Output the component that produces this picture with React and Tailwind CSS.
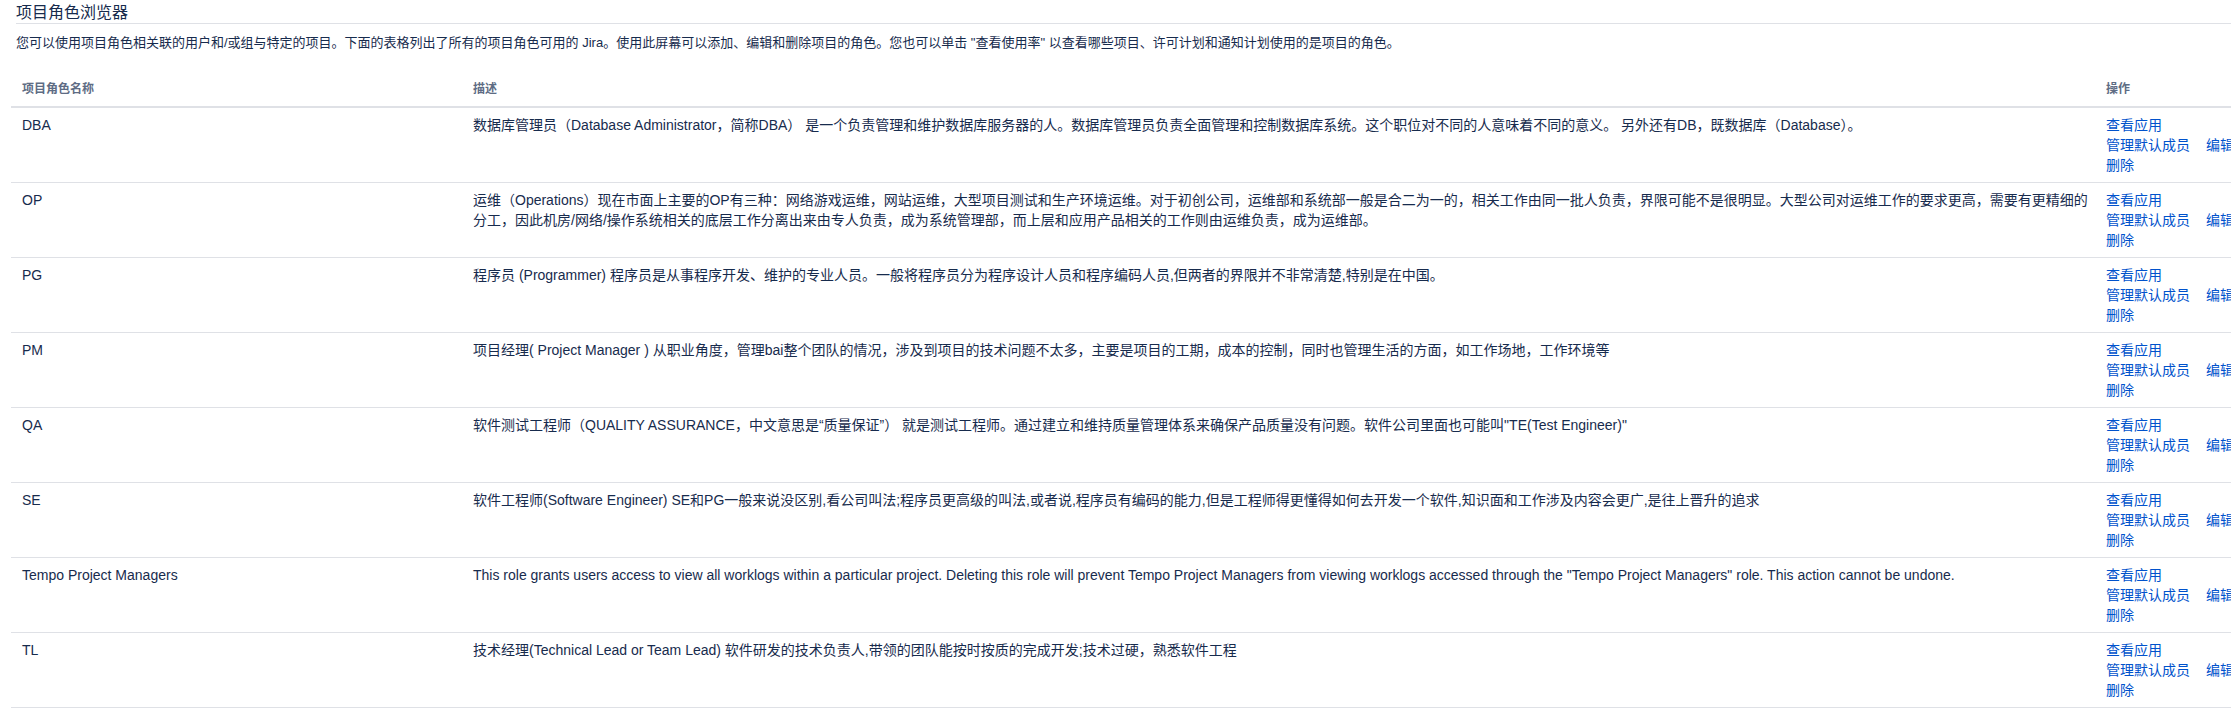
import React from "react";

const roles = [
  {
    name: "DBA",
    desc: "数据库管理员（Database Administrator，简称DBA） 是一个负责管理和维护数据库服务器的人。数据库管理员负责全面管理和控制数据库系统。这个职位对不同的人意味着不同的意义。 另外还有DB，既数据库（Database）。",
  },
  {
    name: "OP",
    desc: "运维（Operations）现在市面上主要的OP有三种：网络游戏运维，网站运维，大型项目测试和生产环境运维。对于初创公司，运维部和系统部一般是合二为一的，相关工作由同一批人负责，界限可能不是很明显。大型公司对运维工作的要求更高，需要有更精细的分工，因此机房/网络/操作系统相关的底层工作分离出来由专人负责，成为系统管理部，而上层和应用产品相关的工作则由运维负责，成为运维部。",
  },
  {
    name: "PG",
    desc: "程序员 (Programmer) 程序员是从事程序开发、维护的专业人员。一般将程序员分为程序设计人员和程序编码人员,但两者的界限并不非常清楚,特别是在中国。",
  },
  {
    name: "PM",
    desc: "项目经理( Project Manager ) 从职业角度，管理bai整个团队的情况，涉及到项目的技术问题不太多，主要是项目的工期，成本的控制，同时也管理生活的方面，如工作场地，工作环境等",
  },
  {
    name: "QA",
    desc: "软件测试工程师（QUALITY ASSURANCE，中文意思是“质量保证”） 就是测试工程师。通过建立和维持质量管理体系来确保产品质量没有问题。软件公司里面也可能叫\"TE(Test Engineer)\"",
  },
  {
    name: "SE",
    desc: "软件工程师(Software Engineer) SE和PG一般来说没区别,看公司叫法;程序员更高级的叫法,或者说,程序员有编码的能力,但是工程师得更懂得如何去开发一个软件,知识面和工作涉及内容会更广,是往上晋升的追求",
  },
  {
    name: "Tempo Project Managers",
    desc: "This role grants users access to view all worklogs within a particular project. Deleting this role will prevent Tempo Project Managers from viewing worklogs accessed through the \"Tempo Project Managers\" role. This action cannot be undone.",
  },
  {
    name: "TL",
    desc: "技术经理(Technical Lead or Team Lead) 软件研发的技术负责人,带领的团队能按时按质的完成开发;技术过硬，熟悉软件工程",
  },
];

function Operations() {
  return (
    <div className="text-[14px] leading-[20px] text-[#0052cc] whitespace-nowrap">
      <div>
        <a href="#">查看应用</a>
      </div>
      <div className="flex">
        <a href="#">管理默认成员</a>
        <a href="#" className="ml-[16px]">编辑</a>
      </div>
      <div>
        <a href="#">删除</a>
      </div>
    </div>
  );
}

export default function App() {
  return (
    <div
      className="w-full min-h-[727px] overflow-hidden bg-white text-[#172b4d]"
      style={{ fontFamily: '"Liberation Sans", "Noto Sans CJK SC", sans-serif' }}
    >
      <div className="pl-[16px]">
        <h2 className="pt-[3px] text-[16px] leading-[20px] font-normal border-b border-[#dfe1e6]">
          项目角色浏览器
        </h2>
        <p className="mt-[10px] text-[13px] leading-[18px]">
          您可以使用项目角色相关联的用户和/或组与特定的项目。下面的表格列出了所有的项目角色可用的 Jira。使用此屏幕可以添加、编辑和删除项目的角色。您也可以单击 "查看使用率" 以查看哪些项目、许可计划和通知计划使用的是项目的角色。
        </p>
      </div>

      <table className="mt-[20px] ml-[11px] w-[2400px] table-fixed border-collapse">
        <colgroup>
          <col className="w-[451px]" />
          <col className="w-[1633px]" />
          <col />
        </colgroup>
        <thead>
          <tr className="border-b-2 border-[#dfe1e6]">
            {["项目角色名称", "描述", "操作"].map((h) => (
              <th
                key={h}
                className="px-[11px] py-[7px] text-left text-[12px] leading-[20px] font-semibold text-[#5e6c84]"
              >
                {h}
              </th>
            ))}
          </tr>
        </thead>
        <tbody>
          {roles.map((r) => (
            <tr key={r.name} className="border-b border-[#dfe1e6] align-top">
              <td className="px-[11px] py-[7px] text-[14px] leading-[20px]">{r.name}</td>
              <td className="pl-[11px] pr-0 py-[7px] text-[14px] leading-[20px]">{r.desc}</td>
              <td className="px-[11px] py-[7px]">
                <Operations />
              </td>
            </tr>
          ))}
        </tbody>
      </table>
    </div>
  );
}
